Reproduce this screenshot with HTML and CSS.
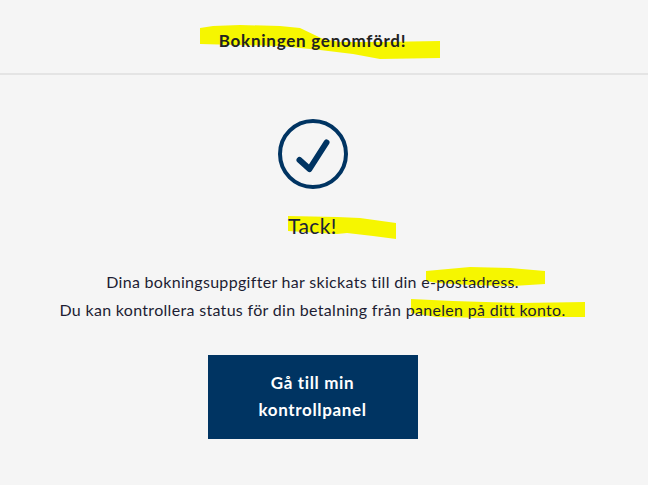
FILE: index.html
```html
<!DOCTYPE html>
<html lang="en">
<head>
    <meta charset="UTF-8">
    <meta name="viewport" content="width=device-width, initial-scale=1.0">
    <title>Bokningen genomförd</title>
    <link rel="stylesheet" href="styles.css">
</head>
<body>
    <!-- marker scribbles that sit under the text -->
    <svg class="marker" width="648" height="485" viewBox="0 0 648 485" aria-hidden="true">
        <polygon points="200,28 213,26 240,25 280,26 300,28 323,39 340,42 380,42 440,41 440,58 380,59 353,54 320,50 280,46 200,44"/>
        <polygon points="288,216 337,217 360,218 396,223 396,239 373,236 347,233 337,234 288,231"/>
        <polygon points="426,271 470,267 510,268 545,271 545,284 513,286 470,285 437,283 426,281"/>
        <polygon points="411,299 453,301 520,303 585,302 585,317 553,317 487,318 437,317 411,313"/>
    </svg>

    <header class="page-header">
        <h1>Bokningen genomförd!</h1>
    </header>

    <main class="content">
        <svg class="check-icon" width="70" height="70" viewBox="0 0 70 70" aria-hidden="true">
            <circle cx="35" cy="35" r="33" fill="none" stroke="#003462" stroke-width="4"/>
            <path d="M21.5 41 L31.5 50 L48.5 23.5" fill="none" stroke="#003462" stroke-width="6" stroke-linecap="round" stroke-linejoin="round"/>
        </svg>
        <h2>Tack!</h2>
        <p class="message">
            Dina bokningsuppgifter har skickats till din e-postadress.<br>
            Du kan kontrollera status för din betalning från panelen på ditt konto.
        </p>
        <a class="panel-btn" href="#">Gå till min kontrollpanel</a>
    </main>
</body>
</html>
```

FILE: styles.css
```css
body {
    margin: 0;
    background-color: #f5f5f5;
    font-family: Lato, "Open Sans", sans-serif;
    color: #1d1d33;
}

.marker {
    position: absolute;
    top: 0;
    left: 0;
}

.marker polygon {
    fill: #f6f600;
}

.page-header {
    position: relative;
    height: 65px;
    padding: 8px 23px 0 0;
    display: flex;
    align-items: center;
    justify-content: center;
    border-bottom: 2px solid #e4e4e4;
}

h1 {
    margin: 0;
    font-size: 17px;
    font-weight: 700;
    letter-spacing: 0.75px;
    color: #222;
}

.content {
    position: relative;
    display: flex;
    flex-direction: column;
    align-items: center;
    padding: 44px 23px 0 0;
}

h2 {
    margin: 24px 0 0;
    font-size: 21px;
    line-height: 26px;
    font-weight: 400;
    letter-spacing: 0.4px;
    color: #1a2238;
}

.message {
    margin: 29px 0 0;
    font-size: 16px;
    line-height: 28px;
    letter-spacing: 0.31px;
    text-align: center;
}

.panel-btn {
    margin-top: 31px;
    width: 210px;
    height: 84px;
    box-sizing: border-box;
    padding: 14px 40px;
    background-color: #003462;
    color: #fff;
    font-size: 17px;
    font-weight: 700;
    letter-spacing: 0.65px;
    line-height: 27px;
    text-align: center;
    text-decoration: none;
}
```
